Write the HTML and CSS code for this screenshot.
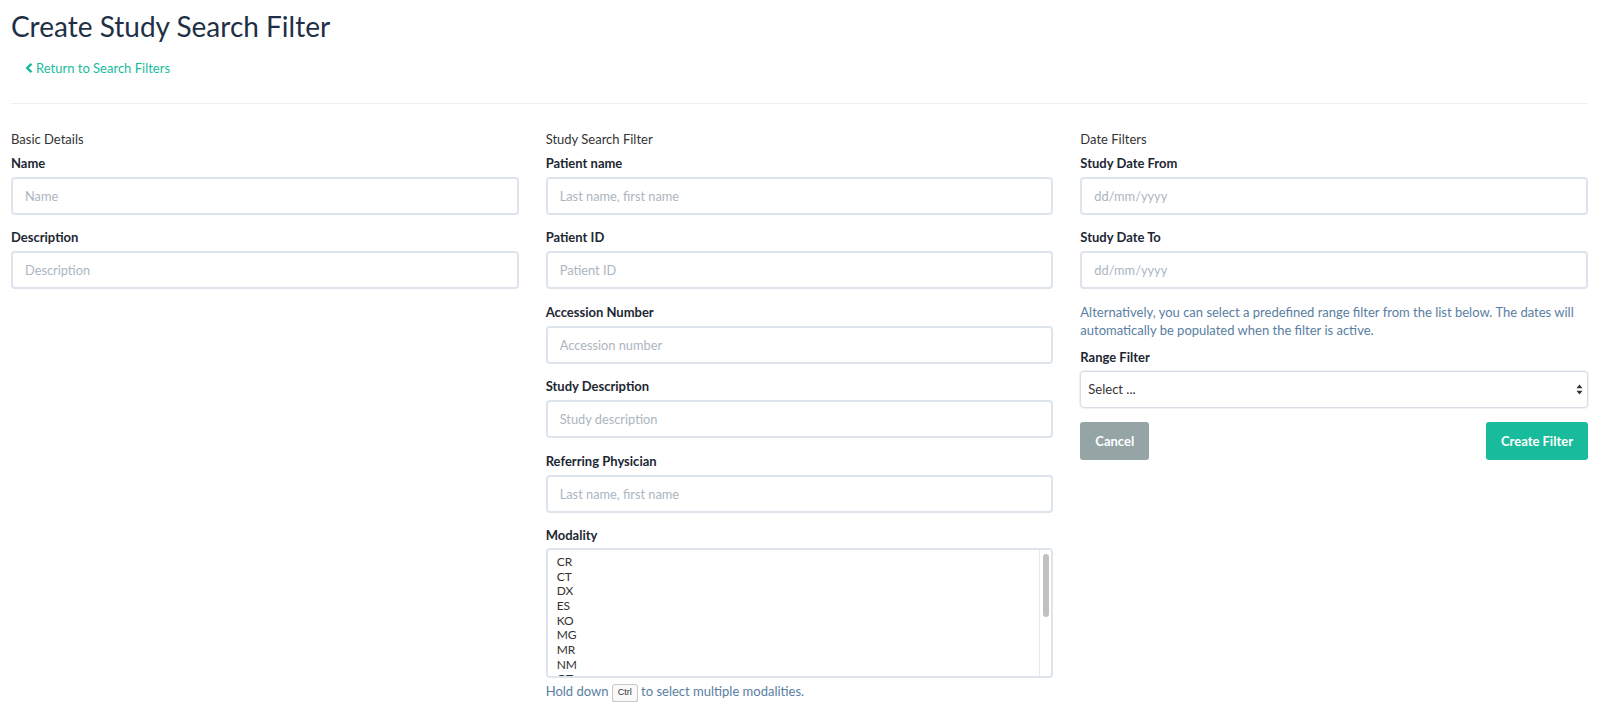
FILE: index.html
```html
<!DOCTYPE html>
<html lang="en">
<head>
<meta charset="utf-8">
<title>Create Study Search Filter</title>
<link rel="stylesheet" href="styles.css">
</head>
<body>
<div class="page">
  <h1 class="title">Create Study Search Filter</h1>
  <a class="back-link" href="#">
    <svg class="chev" width="8" height="10" viewBox="0 0 8 10"><path d="M6.5 0.8 L2.2 5 L6.5 9.2" fill="none" stroke="currentColor" stroke-width="2.4"/></svg>
    Return to Search Filters
  </a>
  <hr class="divider">
  <div class="columns">
    <section class="col">
      <div class="section-title">Basic Details</div>
      <div class="group">
        <label class="lbl">Name</label>
        <input class="field" type="text" placeholder="Name">
      </div>
      <div class="group">
        <label class="lbl">Description</label>
        <input class="field" type="text" placeholder="Description">
      </div>
    </section>
    <section class="col">
      <div class="section-title">Study Search Filter</div>
      <div class="group">
        <label class="lbl">Patient name</label>
        <input class="field" type="text" placeholder="Last name, first name">
      </div>
      <div class="group">
        <label class="lbl">Patient ID</label>
        <input class="field" type="text" placeholder="Patient ID">
      </div>
      <div class="group">
        <label class="lbl">Accession Number</label>
        <input class="field" type="text" placeholder="Accession number">
      </div>
      <div class="group">
        <label class="lbl">Study Description</label>
        <input class="field" type="text" placeholder="Study description">
      </div>
      <div class="group">
        <label class="lbl">Referring Physician</label>
        <input class="field" type="text" placeholder="Last name, first name">
      </div>
      <div class="group-last">
        <label class="lbl lbl-mod">Modality</label>
        <div class="multi" role="listbox">
          <div class="opts">
            <div class="opt">CR</div>
            <div class="opt">CT</div>
            <div class="opt">DX</div>
            <div class="opt">ES</div>
            <div class="opt">KO</div>
            <div class="opt">MG</div>
            <div class="opt">MR</div>
            <div class="opt">NM</div>
            <div class="opt">OT</div>
          </div>
          <div class="scrollbar"><div class="thumb"></div></div>
        </div>
        <p class="help help-mod">Hold down <kbd class="key">Ctrl</kbd> to select multiple modalities.</p>
      </div>
    </section>
    <section class="col">
      <div class="section-title">Date Filters</div>
      <div class="group">
        <label class="lbl">Study Date From</label>
        <input class="field" type="text" placeholder="dd/mm/yyyy">
      </div>
      <div class="group">
        <label class="lbl">Study Date To</label>
        <input class="field" type="text" placeholder="dd/mm/yyyy">
      </div>
      <p class="help help-range">Alternatively, you can select a predefined range filter from the list below. The dates will automatically be populated when the filter is active.</p>
      <div>
        <label class="lbl">Range Filter</label>
        <div class="select-wrap">
          <select class="select">
            <option>Select ...</option>
          </select>
          <svg class="updown" width="7" height="11" viewBox="0 0 7 11"><path d="M3.5 0.5 L6.5 4.3 L0.5 4.3 Z M3.5 10.5 L6.5 6.7 L0.5 6.7 Z" fill="#333"/></svg>
        </div>
      </div>
      <div class="actions">
        <button class="btn btn-cancel" type="button">Cancel</button>
        <button class="btn btn-create" type="button">Create Filter</button>
      </div>
    </section>
  </div>
</div>
</body>
</html>
```
FILE: styles.css
```css
* { box-sizing: border-box; }
html, body {
  margin: 0;
  padding: 0;
  background: #ffffff;
}
body {
  font-family: Lato, "Open Sans", "Liberation Sans", sans-serif;
  color: #2c3e50;
  font-size: 13px;
}
.page {
  padding: 0 12px 0 11px;
}
.title {
  margin: 10px 0 0 0;
  font-size: 28px;
  line-height: 33px;
  font-weight: 400;
  color: #1f3046;
}
.back-link {
  display: inline-flex;
  align-items: center;
  gap: 3px;
  margin-top: 15px;
  margin-left: 14px;
  height: 20px;
  line-height: 20px;
  font-size: 13px;
  color: #18bc9c;
  text-decoration: none;
}
.chev {
  display: block;
}
.divider {
  margin: 25px 0 0 0;
  border: 0;
  border-top: 1px solid #eeeeee;
  height: 0;
}
.columns {
  display: grid;
  grid-template-columns: 1fr 1fr 1fr;
  column-gap: 27px;
  margin-top: 26px;
}
.section-title {
  font-size: 13px;
  line-height: 18px;
  color: #333333;
  margin-bottom: 6px;
}
.group {
  margin-bottom: 13.4px;
}
.group-last {
  margin-bottom: 0;
}
.lbl {
  display: block;
  font-size: 13px;
  line-height: 18px;
  font-weight: 700;
  color: #1d2733;
  margin-bottom: 5px;
}
.lbl-mod {
  margin-bottom: 4px;
}
.field {
  display: block;
  width: 100%;
  height: 38px;
  padding: 0 12px;
  border: 2px solid #dde4ec;
  border-radius: 4px;
  font-family: Lato, "Open Sans", sans-serif;
  font-size: 12.8px;
  color: #2c3e50;
  background: #ffffff;
  outline: none;
}
.field::placeholder {
  color: #acb6c0;
}
.multi {
  position: relative;
  height: 130px;
  border: 2px solid #dde4ec;
  border-radius: 4px;
  overflow: hidden;
}
.opts {
  padding: 5px 9px;
  font-size: 12px;
  line-height: 14.7px;
  color: #333333;
}
.opt {
  height: 14.7px;
}
.scrollbar {
  position: absolute;
  top: 0;
  right: 0;
  bottom: 0;
  width: 12px;
  border-left: 1px solid #e8e8e8;
  background: #ffffff;
}
.thumb {
  margin: 4px 2px 0 3px;
  height: 63px;
  border-radius: 4px;
  background: #c1c1c1;
}
.help {
  margin: 0;
  font-size: 13px;
  line-height: 18px;
  color: #597ea2;
}
.help-mod {
  margin-top: 4px;
}
.help-range {
  margin-bottom: 9px;
}
.key {
  display: inline-block;
  font-family: "Liberation Sans", Arial, sans-serif;
  font-size: 9px;
  line-height: 13px;
  padding: 1px 5px 2px;
  color: #333333;
  background: #f9f9f9;
  border: 1px solid #c8c8c8;
  border-radius: 3px;
  box-shadow: 0 1px 0 #cfcfcf;
  vertical-align: 1px;
}
.select-wrap {
  position: relative;
}
.select {
  display: block;
  width: 100%;
  height: 37px;
  appearance: none;
  -webkit-appearance: none;
  padding: 0 24px 0 7px;
  border: 1px solid #d8dee6;
  border-radius: 4px;
  background: #ffffff;
  font-family: Lato, "Open Sans", sans-serif;
  font-size: 13px;
  color: #333333;
  box-shadow: 0 0 0 1px #eef1f5;
}
.updown {
  position: absolute;
  right: 5px;
  top: 13px;
  pointer-events: none;
}
.actions {
  display: flex;
  justify-content: space-between;
  margin-top: 14px;
}
.btn {
  height: 38px;
  padding: 0 15px;
  border: 0;
  border-radius: 3px;
  font-family: Lato, "Open Sans", sans-serif;
  font-size: 13px;
  font-weight: 700;
  color: #ffffff;
  cursor: pointer;
}
.btn-cancel {
  background: #95a5a6;
}
.btn-create {
  background: #18bc9c;
}
```
